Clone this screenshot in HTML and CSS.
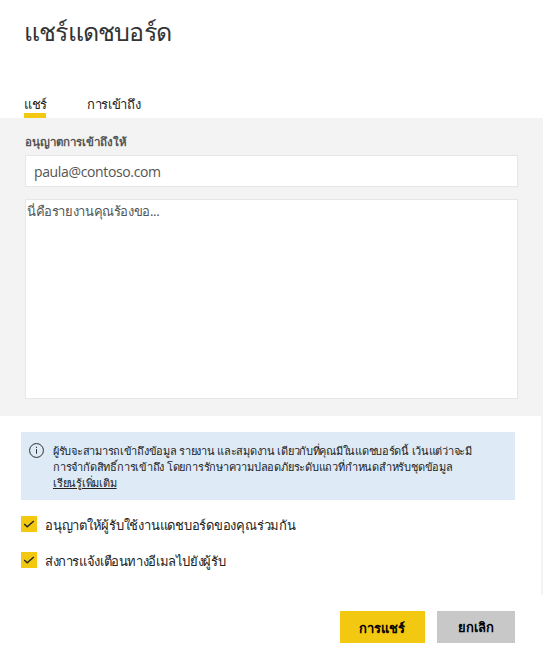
FILE: index.html
```html
<!DOCTYPE html>
<html lang="th">
<head>
<meta charset="utf-8">
<title>แชร์แดชบอร์ด</title>
<link rel="stylesheet" href="styles.css">
</head>
<body>
<main class="dialog">
  <h1 class="title"><span>แชร์แดชบอร์ด</span></h1>
  <nav class="tabs">
    <a class="tab active"><span>แชร์</span></a>
    <a class="tab"><span>การเข้าถึง</span></a>
  </nav>
  <section class="form">
    <label class="label"><span>อนุญาตการเข้าถึงให้</span></label>
    <div class="input">paula@contoso.com</div>
    <div class="message"><span>นี่คือรายงานคุณร้องขอ...</span></div>
  </section>
  <section class="options">
    <div class="notice">
      <svg class="info" viewBox="0 0 16 16"><circle cx="8" cy="8" r="7.4"/><path d="M8 6.5v5M8 4v1.3"/></svg>
      <div class="notice-text">
        <div class="line-first"><span>ผู้รับจะสามารถเข้าถึงข้อมูล รายงาน และสมุดงาน เดียวกับที่คุณมีในแดชบอร์ดนี้ เว้นแต่ว่าจะมี</span></div>
        <div><span>การจำกัดสิทธิ์การเข้าถึง โดยการรักษาความปลอดภัยระดับแถวที่กำหนดสำหรับชุดข้อมูล</span></div>
        <div><span class="link">เรียนรู้เพิ่มเติม</span></div>
      </div>
    </div>
    <div class="check"><svg viewBox="0 0 16 16"><path d="M3.2 8l3 2.8L12.8 5"/></svg><span>อนุญาตให้ผู้รับใช้งานแดชบอร์ดของคุณร่วมกัน</span></div>
    <div class="check notify"><svg viewBox="0 0 16 16"><path d="M3.2 8l3 2.8L12.8 5"/></svg><span>ส่งการแจ้งเตือนทางอีเมลไปยังผู้รับ</span></div>
  </section>
  <footer class="actions">
    <button class="button primary"><span>การแชร์</span></button>
    <button class="button"><span>ยกเลิก</span></button>
  </footer>
</main>
</body>
</html>
```
FILE: styles.css
```css
* { box-sizing: border-box; }
body { margin: 0; background: #fff; color: #222; font: 13px "Noto Sans", "Open Sans", sans-serif; white-space: nowrap; }
.dialog { width: 543px; height: 653px; overflow: hidden; }
.title { margin: 0; height: 90px; padding: 11px 24px; font-size: 25px; letter-spacing: -0.8px; line-height: 40px; font-weight: 400; color: #333; }
.tabs { display: flex; gap: 41px; height: 28px; padding-left: 24px; font-size: 13px; letter-spacing: -0.33px; }
.tab { height: 28px; line-height: 28px; }
.active { width: 22px; border-bottom: 5px solid #f2c811; letter-spacing: -0.5px; }
.form { width: 543px; height: 298px; padding: 14px 25px 0 25px; background: #f3f3f3; }
.label { display: block; height: 23px; line-height: 19px; font-size: 11.5px; font-weight: 600; color: #555; }
.input { height: 32px; padding-left: 8px; border: 1px solid #e6e6e6; background: #fff; font: 14px/32px "Open Sans", sans-serif; letter-spacing: -0.36px; color: #555; }
.message { height: 200px; margin-top: 12px; padding: 2px 1px; border: 1px solid #e6e6e6; background: #fff; line-height: 18px; letter-spacing: -0.38px; color: #555; }
.options { height: 179px; padding: 16px 26px 0 21px; border-right: 2px solid #f3f3f3; }
.notice { display: flex; width: 494px; height: 68px; padding: 11px 8px; gap: 9px; background: #deebf7; }
.info { width: 15px; height: 15px; fill: none; stroke: #222; }
.notice-text { font-size: 11px; line-height: 16px; letter-spacing: -0.22px; }
.line-first { letter-spacing: -0.27px; }
.link { text-decoration: underline; }
.check { display: flex; align-items: center; gap: 8px; height: 16px; margin-top: 16px; letter-spacing: -0.23px; }
.check span { padding-top: 2px; }
.notify { margin-top: 20px; letter-spacing: -0.38px; }
.check svg { width: 16px; height: 16px; background: #f2c811; fill: none; stroke: #222; stroke-width: 1.3; }
.actions { display: flex; gap: 12px; padding: 16px 0 0 340px; }
.button { width: 85px; height: 32px; border: 0; padding: 1px 1px 0 0; font: 600 13px "Noto Sans", sans-serif; color: #000; background: #c8c8c8; }
.button + .button { width: 78px; }
.primary { padding: 3px 2px 0 0; background: #f2c811; }
```
